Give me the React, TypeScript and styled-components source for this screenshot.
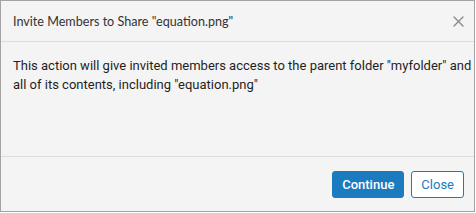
import styled, { createGlobalStyle } from 'styled-components';

const GlobalStyle = createGlobalStyle`
  html, body {
    margin: 0;
    padding: 0;
    background: #ffffff;
  }
  * {
    box-sizing: border-box;
  }
`;

const CloseIcon = () => (
  <svg width="11" height="11" viewBox="0 0 11 11" aria-hidden="true">
    <path d="M1 1L10 10M10 1L1 10" stroke="#8a8a8a" strokeWidth="1.4" strokeLinecap="round" />
  </svg>
);

export default function App() {
  return (
    <>
      <GlobalStyle />
      <Dialog>
        <Header>
          <Title>Invite Members to Share "equation.png"</Title>
          <IconButton aria-label="Close">
            <CloseIcon />
          </IconButton>
        </Header>
        <Body>
          This action will give invited members access to the parent folder "myfolder" and all of its
          contents, including "equation.png"
        </Body>
        <Footer>
          <Button $primary>Continue</Button>
          <Button>Close</Button>
        </Footer>
      </Dialog>
    </>
  );
}

const Dialog = styled.div`
  width: 475px;
  height: 212px;
  display: flex;
  flex-direction: column;
  background: #f4f4f4;
  border: 1px solid #a3a3a3;
  font-family: Roboto, 'Liberation Sans', sans-serif;
  color: #222222;
`;

const Header = styled.div`
  height: 41px;
  flex-shrink: 0;
  display: flex;
  align-items: center;
  justify-content: space-between;
  padding: 0 8px 0 12px;
  border-bottom: 1px solid #dddddd;
`;

const Title = styled.div`
  font-family: Lato, sans-serif;
  font-size: 12.6px;
  color: #333333;
`;

const IconButton = styled.button`
  display: flex;
  align-items: center;
  justify-content: center;
  width: 16px;
  height: 16px;
  padding: 0;
  border: none;
  background: none;
  cursor: pointer;
`;

const Body = styled.div`
  flex: 1;
  padding: 14px 2px 0 12px;
  font-size: 13px;
  line-height: 19px;
  color: #1f1f1f;
  border-bottom: 1px solid #dddddd;
`;

const Footer = styled.div`
  height: 54px;
  flex-shrink: 0;
  display: flex;
  align-items: center;
  justify-content: flex-end;
  gap: 7px;
  padding: 0 10px 0 0;
`;

const Button = styled.button<{ $primary?: boolean }>`
  height: 27px;
  padding: 0 ${(p) => (p.$primary ? '9px' : '9px')};
  border-radius: 3px;
  font-family: Roboto, 'Liberation Sans', sans-serif;
  font-size: 13px;
  font-weight: ${(p) => (p.$primary ? 500 : 400)};
  border: 1px solid #1b7bbf;
  background: ${(p) => (p.$primary ? '#1b7bbf' : '#ffffff')};
  color: ${(p) => (p.$primary ? '#ffffff' : '#1b7bbf')};
  cursor: pointer;
`;
